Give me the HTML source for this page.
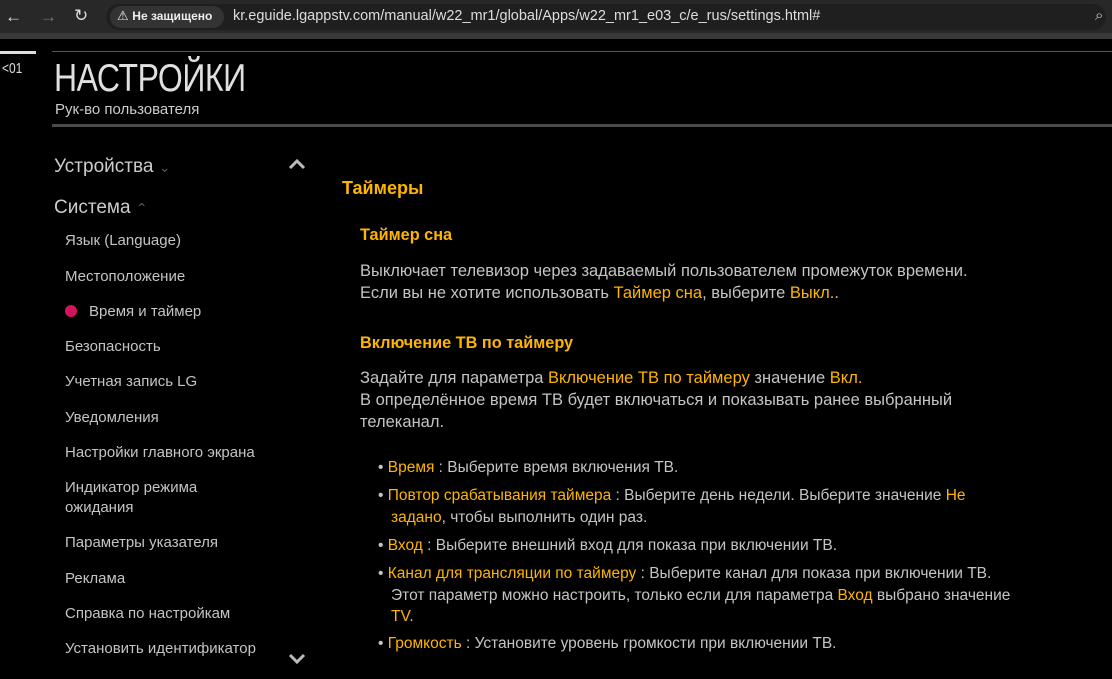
<!DOCTYPE html>
<html><head><meta charset="utf-8"><style>
*{margin:0;padding:0;box-sizing:border-box}
body{width:1112px;height:679px;background:#000;overflow:hidden;position:relative;font-family:"Liberation Sans","DejaVu Sans",sans-serif;color:#c8c8c8}
.a{position:absolute;white-space:nowrap}
.o{color:#ffb400}
.s{font-size:15px;color:#c4c4c4}
.b{font-size:15.5px;color:#c4c4c4}
.c{font-size:16.5px;color:#c4c4c4}
</style></head><body>
<div class="a" style="left:0;top:0;width:1112px;height:33px;background:#282828"></div>
<div class="a" style="left:0;top:33px;width:1112px;height:6px;background:#3a3a3a"></div>
<div class="a" style="left:5px;top:7px;font-size:17px;color:#ddd">←</div>
<div class="a" style="left:40px;top:7px;font-size:17px;color:#777">→</div>
<div class="a" style="left:74px;top:6px;font-size:17px;color:#ddd">↻</div>
<div class="a" style="left:106px;top:4px;width:1000px;height:26px;border-radius:13px;background:#1f1f1f"></div>
<div class="a" style="left:110px;top:6px;width:114px;height:22px;border-radius:11px;background:#333"></div>
<div class="a" style="left:117px;top:8px;font-size:13px;color:#eee">⚠ <b style="font-size:12px">Не защищено</b></div>
<div class="a" style="left:233px;top:8px;font-size:14.5px;color:#ddd">kr.eguide.lgappstv.com/manual/w22_mr1/global/Apps/w22_mr1_e03_c/e_rus/settings.html#</div>
<div class="a" style="left:1095px;top:7px;font-size:15px;color:#ccc">⌕</div>

<div class="a" style="left:0;top:51px;width:36px;height:3px;background:#ddd"></div>
<div class="a" style="left:52px;top:51px;width:1060px;height:1px;background:#555"></div>
<div class="a" style="left:2px;top:60px;font-size:15px;color:#ddd;transform:scaleX(.8);transform-origin:left">&lt;01</div>
<div class="a" style="left:54px;top:57px;font-size:39px;color:#e0e0e0;transform:scaleX(.82);transform-origin:left;letter-spacing:-0.5px">НАСТРОЙКИ</div>
<div class="a" style="left:55px;top:101px;font-size:15px;color:#ccc">Рук-во пользователя</div>
<div class="a" style="left:52px;top:124px;width:1060px;height:3px;background:#4a4a4a"></div>

<div class="a" style="left:54px;top:156px;font-size:19px;color:#ccc">Устройства <span style="color:#555;font-size:14px">⌄</span></div>
<div class="a" style="left:54px;top:197px;font-size:19px;color:#ccc">Система <span style="color:#555;font-size:14px">⌃</span></div>
<svg class="a" style="left:287px;top:158px" width="20" height="14"><path d="M3 10 L10 3 L17 10" stroke="#bbb" stroke-width="3" fill="none"/></svg>
<svg class="a" style="left:287px;top:652px" width="20" height="14"><path d="M3 3 L10 10 L17 3" stroke="#bbb" stroke-width="3" fill="none"/></svg>
<div class="a s" style="left:65px;top:232px">Язык (Language)</div>
<div class="a s" style="left:65px;top:268px">Местоположение</div>
<div class="a" style="left:65px;top:305px;width:12px;height:12px;border-radius:50%;background:#d4145a"></div>
<div class="a s" style="left:89px;top:303px">Время и таймер</div>
<div class="a s" style="left:65px;top:338px">Безопасность</div>
<div class="a s" style="left:65px;top:373px">Учетная запись LG</div>
<div class="a s" style="left:65px;top:409px">Уведомления</div>
<div class="a s" style="left:65px;top:444px">Настройки главного экрана</div>
<div class="a s" style="left:65px;top:479px">Индикатор режима</div>
<div class="a s" style="left:65px;top:499px">ожидания</div>
<div class="a s" style="left:65px;top:534px">Параметры указателя</div>
<div class="a s" style="left:65px;top:570px">Реклама</div>
<div class="a s" style="left:65px;top:605px">Справка по настройкам</div>
<div class="a s" style="left:65px;top:640px">Установить идентификатор</div>

<div class="a o" style="left:342px;top:178px;font-size:18px;font-weight:bold">Таймеры</div>
<div class="a o" style="left:360px;top:226px;font-size:16.3px;font-weight:bold">Таймер сна</div>
<div class="a c" style="left:360px;top:262px">Выключает телевизор через задаваемый пользователем промежуток времени.</div>
<div class="a c" style="left:360px;top:284px">Если вы не хотите использовать <span class="o">Таймер сна</span>, выберите <span class="o">Выкл.</span>.</div>
<div class="a o" style="left:360px;top:334px;font-size:16.3px;font-weight:bold">Включение ТВ по таймеру</div>
<div class="a c" style="left:360px;top:369px">Задайте для параметра <span class="o">Включение ТВ по таймеру</span> значение <span class="o">Вкл.</span></div>
<div class="a c" style="left:360px;top:391px">В определённое время ТВ будет включаться и показывать ранее выбранный</div>
<div class="a c" style="left:360px;top:413px">телеканал.</div>
<div class="a b" style="left:378px;top:459px">• <span class="o">Время</span> : Выберите время включения ТВ.</div>
<div class="a b" style="left:378px;top:487px">• <span class="o">Повтор срабатывания таймера</span> : Выберите день недели. Выберите значение <span class="o">Не</span></div>
<div class="a b" style="left:391px;top:509px"><span class="o">задано</span>, чтобы выполнить один раз.</div>
<div class="a b" style="left:378px;top:537px">• <span class="o">Вход</span> : Выберите внешний вход для показа при включении ТВ.</div>
<div class="a b" style="left:378px;top:565px">• <span class="o">Канал для трансляции по таймеру</span> : Выберите канал для показа при включении ТВ.</div>
<div class="a b" style="left:391px;top:587px">Этот параметр можно настроить, только если для параметра <span class="o">Вход</span> выбрано значение</div>
<div class="a b" style="left:391px;top:608px"><span class="o">TV</span>.</div>
<div class="a b" style="left:378px;top:635px">• <span class="o">Громкость</span> : Установите уровень громкости при включении ТВ.</div>
</body></html>
